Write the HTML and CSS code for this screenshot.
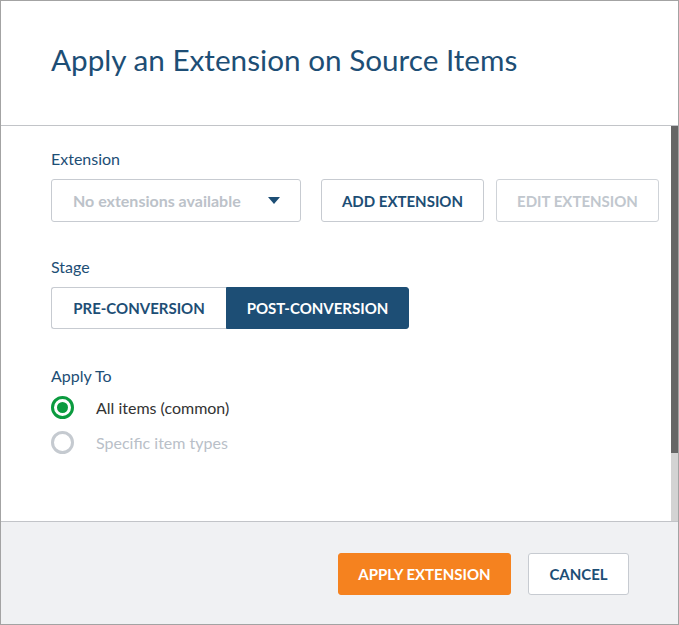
FILE: index.html
```html
<!DOCTYPE html>
<html>
<head>
<meta charset="utf-8">
<link rel="stylesheet" href="styles.css">
</head>
<body>
<div class="dialog">
  <header class="dialog-header">
    <h1 class="title">Apply an Extension on Source Items</h1>
  </header>
  <div class="dialog-body">
    <div class="content">
      <div class="field-label">Extension</div>
      <div class="row">
        <div class="select">
          <span class="select-text">No extensions available</span>
          <svg class="caret" width="12" height="7" viewBox="0 0 12 7"><path d="M0 0H12L6 7Z" fill="#1d4e75"/></svg>
        </div>
        <button class="btn btn-outline btn-add">ADD EXTENSION</button>
        <button class="btn btn-outline btn-disabled">EDIT EXTENSION</button>
      </div>
      <div class="field-label stage-label">Stage</div>
      <div class="segmented">
        <button class="seg">PRE-CONVERSION</button>
        <button class="seg seg-active">POST-CONVERSION</button>
      </div>
      <div class="field-label apply-label">Apply To</div>
      <div class="radio-list">
        <div class="radio radio-checked"><span class="radio-circle"><span class="radio-dot"></span></span><span class="radio-text">All items (common)</span></div>
        <div class="radio radio-disabled"><span class="radio-circle"></span><span class="radio-text">Specific item types</span></div>
      </div>
    </div>
    <div class="scrollbar"><div class="thumb"></div></div>
  </div>
  <footer class="dialog-footer">
    <button class="btn btn-primary">APPLY EXTENSION</button>
    <button class="btn btn-cancel">CANCEL</button>
  </footer>
</div>
</body>
</html>
```
FILE: styles.css
```css
* { box-sizing: border-box; }
html, body { margin: 0; padding: 0; background: #fff; }
body { font-family: Lato, "Noto Sans", sans-serif; }
.dialog {
  width: 679px;
  height: 625px;
  border: 1px solid #a3a3a3;
  display: flex;
  flex-direction: column;
  background: #fff;
}
.dialog-header {
  height: 125px;
  border-bottom: 1px solid #c2c4c8;
  padding: 39px 0 0 50px;
  flex: none;
}
.title {
  margin: 0;
  font-weight: 400;
  font-size: 29.7px;
  line-height: 40px;
  color: #1d4e75;
}
.dialog-body {
  flex: 1;
  display: flex;
}
.content {
  flex: 1;
  padding: 23px 0 0 50px;
}
.scrollbar {
  width: 7px;
  background: #d3d3d3;
  flex: none;
}
.thumb {
  height: 327px;
  background: #666;
}
.field-label {
  font-size: 16px;
  line-height: 20px;
  color: #1d4e75;
  height: 20px;
}
.row {
  display: flex;
  margin-top: 10px;
}
.select {
  width: 250px;
  height: 43px;
  border: 1px solid #c7cbd1;
  border-radius: 3px;
  display: flex;
  align-items: center;
  justify-content: space-between;
  padding: 0 20px 0 21px;
}
.select-text {
  font-size: 16px;
  font-weight: 700;
  color: #bcc2c9;
}
.caret { display: block; }
.btn {
  font-family: Lato, "Noto Sans", sans-serif;
  font-size: 15px;
  font-weight: 700;
  border-radius: 3px;
  height: 43px;
  background: #fff;
  padding: 0;
  cursor: pointer;
}
.btn-outline {
  width: 163px;
  border: 1px solid #c7cbd1;
  color: #1d4e75;
}
.btn-add { margin-left: 20px; }
.btn-disabled {
  margin-left: 12px;
  color: #c1c7ce;
  border-color: #cfd3d8;
}
.stage-label { margin-top: 35px; }
.segmented {
  display: flex;
  margin-top: 10px;
}
.seg {
  font-family: Lato, "Noto Sans", sans-serif;
  font-size: 15px;
  font-weight: 700;
  height: 42px;
  padding: 0;
  background: #fff;
  color: #1d4e75;
  border: 1px solid #c7cbd1;
}
.seg:first-child {
  width: 175px;
  border-right: none;
  border-radius: 3px 0 0 3px;
}
.seg-active {
  width: 183px;
  background: #1d4e75;
  border-color: #1d4e75;
  color: #fff;
  border-radius: 0 3px 3px 0;
}
.apply-label { margin-top: 37px; }
.radio-list {
  margin-top: 10px;
  display: flex;
  flex-direction: column;
  gap: 12px;
}
.radio {
  display: flex;
  align-items: center;
  height: 23px;
}
.radio-circle {
  width: 23px;
  height: 23px;
  border-radius: 50%;
  border: 3px solid #c5cad0;
  display: flex;
  align-items: center;
  justify-content: center;
  flex: none;
}
.radio-checked .radio-circle { border-color: #0b9b3f; }
.radio-dot {
  width: 11px;
  height: 11px;
  border-radius: 50%;
  background: #0b9b3f;
}
.radio-text {
  margin-left: 22px;
  font-size: 16px;
  color: #333;
}
.radio-disabled .radio-text { color: #b9c0c8; }
.dialog-footer {
  height: 103px;
  flex: none;
  border-top: 1px solid #c2c4c8;
  background: #f0f1f3;
  display: flex;
  justify-content: flex-end;
  align-items: flex-start;
  padding: 31px 49px 0 0;
  gap: 17px;
}
.btn-primary {
  width: 173px;
  height: 42px;
  background: #f5821f;
  border: 1px solid #f5821f;
  color: #fff;
}
.btn-cancel {
  width: 101px;
  height: 42px;
  border: 1px solid #c7cbd1;
  color: #1d4e75;
}
```
